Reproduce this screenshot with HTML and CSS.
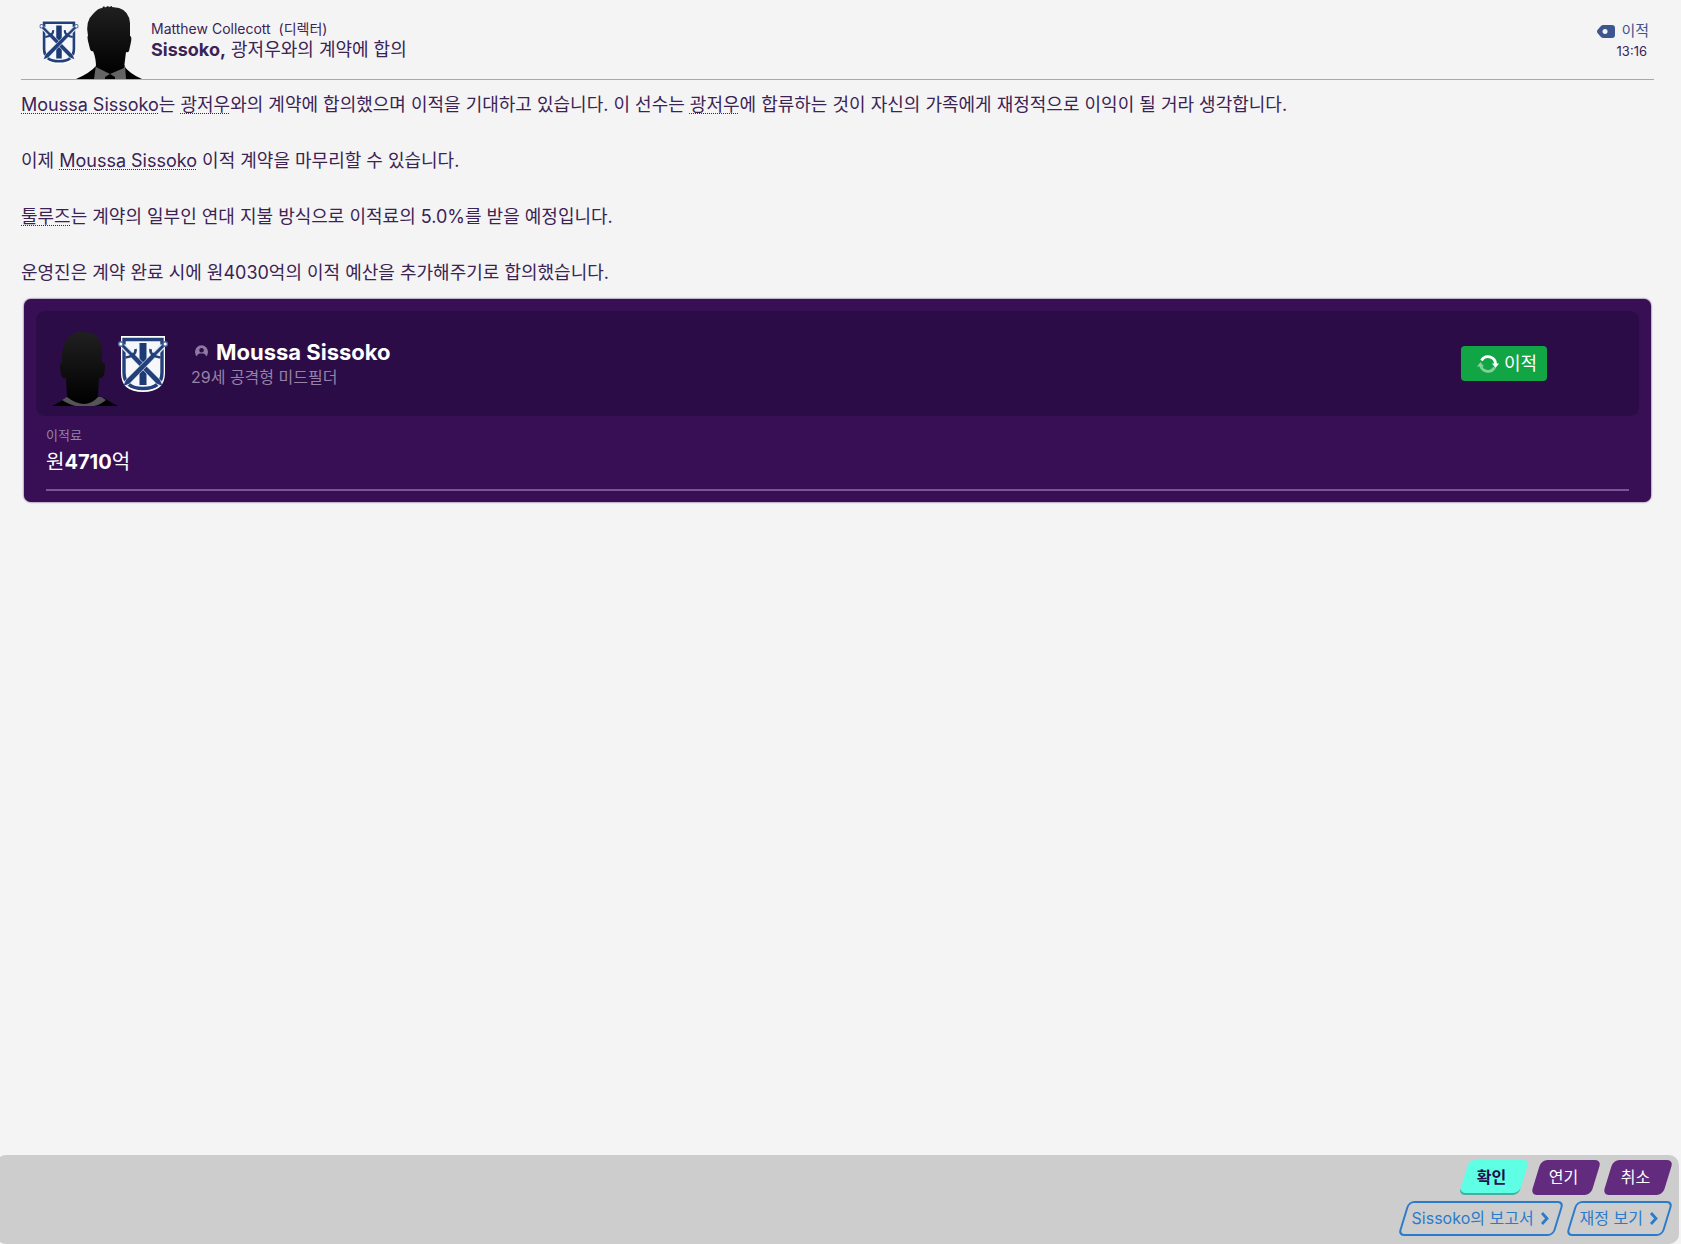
FILE: index.html
```html
<!DOCTYPE html>
<html lang="ko">
<head>
<meta charset="utf-8">
<title>Sissoko, 광저우와의 계약에 합의</title>
<link rel="stylesheet" href="styles.css">
</head>
<body>
<svg class="defs" aria-hidden="true">
  <symbol id="crest" viewBox="0 0 50 56">
    <path d="M3 0h44v37Q47 56 25 56T3 37Z" fill="#fff"/>
    <path d="M6 3.500h38v33Q44 52.500 25 52.500T6 36.500Z" fill="#f6f7fb" stroke="#22407a" stroke-width="3.400"/>
    <path d="M21.500 7h7v42h-7z" fill="#1c3a75"/>
    <g id="sword">
      <path d="M5 10 43 48.500" stroke="#dfe4ef" stroke-width="5.600"/>
      <path d="M4 9 15 20" stroke="#22407a" stroke-width="3"/>
      <path d="M14.500 16.500 42 44l2.500 6-6-2.500L11.500 19.500Z" fill="#22407a"/>
      <path d="M17.500 13q.500 4-2.500 6t-7.500 2.500" fill="none" stroke="#22407a" stroke-width="2.600"/>
      <circle cx="2.800" cy="8" r="2.200" fill="#fff" stroke="#4c689c" stroke-width="1.400"/>
    </g>
    <use href="#sword" transform="matrix(-1 0 0 1 50 0)"/>
  </symbol>
  <linearGradient id="shade" x1="0" y1="0" x2="0" y2="1">
    <stop offset="0" stop-color="#202020"/><stop offset="1" stop-color="#000"/>
  </linearGradient>
</svg>

<header class="header">
  <div class="sender">
    <svg class="crest-small" viewBox="0 0 50 56" role="img" aria-label="구단 엠블럼"><use href="#crest"/></svg>
    <svg class="director" viewBox="0 0 66 73" role="img" aria-label="Matthew Collecott">
      <path d="M20 60Q14 67 0 73h66Q54 68 48 60Z" fill="#000"/>
      <path d="M20 59 18 73h32l-1-14Z" fill="#646464"/>
      <path d="M29 71l5-3 5 3v2H29Z" fill="#000"/>
      <path d="M12 30Q9 15 17 8 22 2 26 2l2-2 1 1.500L32 0l1 1 3-1 0 1 7 1Q53 5 54 17l0 13q2 0 1 6l-2 9q-1 2-3 1Q49 54 48 62L34 68 20 61Q20 52 17 45q-2 1-3-2l-2-8q-1-5 0-5Z" fill="url(#shade)"/>
    </svg>
    <div class="subject">
      <p class="from">Matthew Collecott&nbsp; (디렉터)</p>
      <h1 class="title"><b>Sissoko,</b> 광저우와의 계약에 합의</h1>
    </div>
  </div>
  <div class="meta">
    <a class="tag" href="#">
      <svg class="tag-icon" viewBox="0 0 18 13" aria-hidden="true"><path fill-rule="evenodd" d="M6 0h9q3 0 3 3v7q0 3-3 3H6Q4.500 13 3 11L.500 8Q-.500 6.500.500 5L3 2Q4.500 0 6 0Zm2 4a2.500 2.500 0 1 0 .1 0Z" fill="#3e5690"/></svg>
      이적
    </a>
    <time>13:16</time>
  </div>
</header>

<main class="content">
  <div class="message">
    <p><a href="#">Moussa Sissoko</a>는 <a href="#">광저우</a>와의 계약에 합의했으며 이적을 기대하고 있습니다. 이 선수는 <a href="#">광저우</a>에 합류하는 것이 자신의 가족에게 재정적으로 이익이 될 거라 생각합니다.</p>
    <p>이제 <a href="#">Moussa Sissoko</a> 이적 계약을 마무리할 수 있습니다.</p>
    <p><a href="#">툴루즈</a>는 계약의 일부인 연대 지불 방식으로 이적료의 5.0%를 받을 예정입니다.</p>
    <p>운영진은 계약 완료 시에 원4030억의 이적 예산을 추가해주기로 합의했습니다.</p>
  </div>

  <section class="card">
    <div class="player">
      <svg class="portrait" viewBox="0 0 66 75" role="img" aria-label="Moussa Sissoko">
        <path d="M14 67Q8 71 0 75h66Q58 71 52 67Z" fill="#000"/>
        <path d="M15 66 10 69q8 5 14 6h18q6-1 12-6l-5-3Z" fill="#555"/>
        <path d="M10 32Q9 12 18 5 24 0 34 1l8 2Q50 9 50 20v12q4-1 3 5l-1 7q-2 4-5 3l-1 19Q40 73 32 73T15 66L14 47q-4 1-5-4L8 36q0-5 2-4Z" fill="url(#shade)"/>
      </svg>
      <svg class="crest-large" viewBox="0 0 50 56" role="img" aria-label="구단 엠블럼"><use href="#crest"/></svg>
      <div class="identity">
        <h2 class="name">
          <svg class="person" viewBox="0 0 13 13" aria-hidden="true"><path fill-rule="evenodd" d="M2 11.500A6.500 6.500 0 1 1 11 11.500Q11 9 8.500 8.500h-4Q2 9 2 11.500ZM6.500 3a2.300 2.300 0 1 0 .1 0Z" fill="#8f78a3"/></svg>
          Moussa Sissoko
        </h2>
        <p class="role">29세 공격형 미드필더</p>
      </div>
      <button class="transfer" type="button">
        <svg class="cycle" viewBox="0 0 22 18" aria-hidden="true">
          <g fill="none" stroke-width="2.800"><path d="M4.500 5.500A7.500 7.500 0 0 1 18.500 9" stroke="#fff"/><path d="M17.500 12.500A7.500 7.500 0 0 1 3.500 9" stroke="#86cf9b"/></g>
          <path d="M15 8.500h7l-3.500 4.500Z" fill="#fff"/><path d="M0 11.500h7L3.500 7Z" fill="#86cf9b"/>
        </svg>
        이적
      </button>
    </div>
    <dl class="fee">
      <dt>이적료</dt>
      <dd>원<b>4710</b>억</dd>
    </dl>
  </section>
</main>

<footer class="actions">
  <div class="row">
    <button class="btn primary" type="button">확인</button>
    <button class="btn" type="button">연기</button>
    <button class="btn" type="button">취소</button>
  </div>
  <div class="row">
    <button class="btn outline" type="button">Sissoko의 보고서 <svg class="chevron" viewBox="0 0 8 13" aria-hidden="true"><path d="M1 1l5 5.500-5 5.500" fill="none" stroke="#2a7bcb" stroke-width="2.800"/></svg></button>
    <button class="btn outline" type="button">재정 보기 <svg class="chevron" viewBox="0 0 8 13" aria-hidden="true"><path d="M1 1l5 5.500-5 5.500" fill="none" stroke="#2a7bcb" stroke-width="2.800"/></svg></button>
  </div>
</footer>
</body>
</html>
```
FILE: styles.css
```css
* { box-sizing: border-box; }

body, h1, h2, p, dl, dd { margin: 0; }

body {
  display: flex;
  flex-direction: column;
  min-height: 100vh;
  overflow-x: hidden;
  background: #f4f4f4;
  color: #3b2354;
  font-family: Inter, "Noto Sans CJK KR", sans-serif;
  font-size: 18px;
  line-height: 28px;
}

button {
  border: 0;
  padding: 0;
  background: none;
  font: inherit;
  cursor: pointer;
}

svg { display: block; flex: none; }
.defs { position: absolute; width: 0; height: 0; }

.header {
  display: flex;
  justify-content: space-between;
  height: 80px;
  margin: 0 27px 0 21px;
  padding: 0 5px 0 18px;
  border-bottom: 1px solid #aaa6b2;
}

.sender { display: flex; align-items: flex-end; }
.crest-small { width: 40px; height: 44px; margin-bottom: 15px; }
.director { width: 66px; height: 73px; margin-left: -3px; }
.subject { margin: 0 0 19px 9px; }
.from { font-size: 14px; line-height: 22px; }
.title { font-size: 18px; line-height: 20px; font-weight: 400; }

.meta {
  display: flex;
  flex-direction: column;
  align-items: flex-end;
  padding-top: 21px;
  font-size: 13px;
  line-height: 20px;
}
.meta time { padding-right: 2px; }
.tag {
  display: flex;
  align-items: center;
  gap: 6px;
  color: #3e5690;
  font-size: 15px;
  text-decoration: none;
}
.tag-icon { width: 18px; height: 13px; }

.content { flex: 1; padding: 11px 30px 24px 21px; }
.message { display: grid; gap: 28px; }
.message a {
  color: inherit;
  text-decoration: underline dotted 1px;
  text-underline-offset: 2px;
  text-decoration-skip-ink: none;
}

.card {
  margin: 12px 0 0 3px;
  padding: 12px 12px 11px;
  border-radius: 7px;
  background: #380f55;
  box-shadow: 0 0 2px #380f55;
}
.player {
  display: flex;
  align-items: center;
  height: 105px;
  padding: 0 92px 0 16px;
  border-radius: 9px;
  background: #2c0c46;
}
.portrait { width: 66px; height: 75px; align-self: flex-end; margin-bottom: 10px; }
.crest-large { width: 50px; height: 56px; }
.identity { flex: 1; margin-left: 23px; }
.name {
  display: flex;
  align-items: center;
  gap: 8px;
  padding-left: 4px;
  color: #fff;
  font-size: 22px;
  line-height: 26px;
}
.person { width: 13px; height: 13px; }
.role { color: #9683a8; font-size: 16px; line-height: 24px; }
.transfer {
  display: flex;
  align-items: center;
  gap: 5px;
  height: 35px;
  padding: 0 10px 0 16px;
  border-radius: 4px;
  background: #12a545;
  color: #fff;
}
.cycle { width: 22px; height: 18px; }

.fee {
  margin: 8px 10px 0;
  padding-bottom: 11px;
  border-bottom: 2px solid #795691;
}
.fee dt { color: #9683a8; font-size: 13px; line-height: 22px; }
.fee dd { color: #fff; font-size: 20px; line-height: 32px; }

.actions {
  display: grid;
  gap: 6px;
  margin: 0 2px 0 -4px;
  padding: 5px 7px 8px;
  border-radius: 10px;
  background: #cdcdcd;
}
.row { display: flex; justify-content: flex-end; gap: 4px; }

.btn {
  position: relative;
  z-index: 0;
  min-width: 68px;
  height: 35px;
  padding: 0 19px 0 14px;
  color: #fff;
  font-size: 16px;
  line-height: 35px;
}
.btn::before {
  content: "";
  position: absolute;
  z-index: -1;
  inset: 0 4px;
  border-radius: 6px;
  background: #622b7e;
  transform: skewX(-17deg);
}
.primary { color: #240d4a; font-weight: 700; }
.primary::before { background: #5effe5; box-shadow: inset 0 -2px #4aae9f; }
.outline {
  display: flex;
  align-items: center;
  gap: 7px;
  padding: 0 14px 0 13px;
  color: #2a7bcb;
}
.outline::before { border: 2px solid #2a7bcb; background: none; }
.chevron { width: 8px; height: 13px; }
```
